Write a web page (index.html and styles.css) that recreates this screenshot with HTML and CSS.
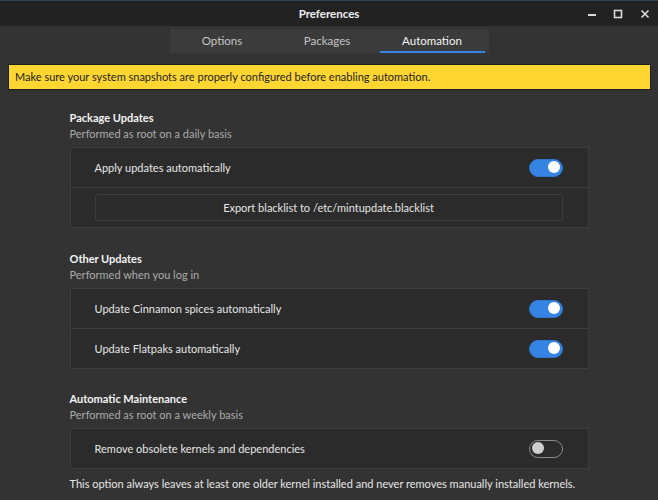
FILE: index.html
```html
<!DOCTYPE html>
<html lang="en">
<head>
    <meta charset="UTF-8">
    <meta name="viewport" content="width=device-width, initial-scale=1.0">
    <title>Preferences</title>
    <link rel="stylesheet" href="styles.css">
</head>
<body>

    <div class="titlebar">
        <span class="title">Preferences</span>
        <div class="controls">
            <svg width="10" height="10" viewBox="0 0 10 10"><rect x="1" y="5" width="8" height="2" fill="#ddd"/></svg>
            <svg class="max" width="10" height="10" viewBox="0 0 10 10"><rect x="1.5" y="1.5" width="7" height="7" fill="none" stroke="#ddd" stroke-width="1.6"/></svg>
            <svg class="close" width="10" height="10" viewBox="0 0 10 10"><path d="M1.5 1.5 L8.5 8.5 M8.5 1.5 L1.5 8.5" stroke="#ddd" stroke-width="1.6"/></svg>
        </div>
    </div>

    <div class="tabs">
        <div class="tab">Options</div>
        <div class="tab">Packages</div>
        <div class="tab active">Automation</div>
    </div>

    <div class="banner">Make sure your system snapshots are properly configured before enabling automation.</div>

    <div class="content">
        <div class="section">
            <h3>Package Updates</h3>
            <p class="sub">Performed as root on a daily basis</p>
            <div class="card">
                <div class="row">
                    <span>Apply updates automatically</span>
                    <div class="switch on"></div>
                </div>
                <div class="row">
                    <button class="export">Export blacklist to /etc/mintupdate.blacklist</button>
                </div>
            </div>
        </div>

        <div class="section">
            <h3>Other Updates</h3>
            <p class="sub">Performed when you log in</p>
            <div class="card">
                <div class="row">
                    <span>Update Cinnamon spices automatically</span>
                    <div class="switch on"></div>
                </div>
                <div class="row">
                    <span>Update Flatpaks automatically</span>
                    <div class="switch on"></div>
                </div>
            </div>
        </div>

        <div class="section">
            <h3>Automatic Maintenance</h3>
            <p class="sub">Performed as root on a weekly basis</p>
            <div class="card">
                <div class="row">
                    <span>Remove obsolete kernels and dependencies</span>
                    <div class="switch"></div>
                </div>
            </div>
            <p class="note">This option always leaves at least one older kernel installed and never removes manually installed kernels.</p>
        </div>
    </div>

</body>
</html>
```

FILE: styles.css
```css
body {
    font-family: Lato, sans-serif;
    font-size: 11px;
    background-color: #333333;
    color: #e6e6e6;
    margin: 0;
    overflow: hidden;
}

.titlebar {
    height: 26px;
    background-color: #222222;
    border-top: 1px solid #26465a;
    box-sizing: border-box;
    display: flex;
    align-items: center;
    justify-content: center;
    position: relative;
}

.title {
    font-weight: bold;
    font-size: 11.5px;
    color: #f0f0f0;
}

.controls {
    position: absolute;
    right: 8px;
    top: 8px;
    display: flex;
}

.controls .max {
    margin-left: 16px;
}

.controls .close {
    margin-left: 17px;
}

.tabs {
    width: 319px;
    height: 24px;
    margin: 3px auto 0;
    background-color: #3b3b3b;
    display: flex;
}

.tab {
    flex: 1;
    text-align: center;
    line-height: 24px;
    color: #c4c4c4;
    font-size: 11.5px;
    box-sizing: border-box;
}

.tab.active {
    color: #f4f4f4;
    border-bottom: 2px solid #3584e4;
    line-height: 23px;
    margin-right: 4px;
}

.banner {
    margin: 11px 7px 0 8px;
    height: 26px;
    box-sizing: border-box;
    background-color: #fed631;
    border: 1px solid #1e1e1e;
    color: #222222;
    line-height: 24px;
    padding-left: 6px;
}

.content {
    width: 519px;
    margin: 20px auto 0;
}

.section {
    margin-bottom: 23px;
}

.section + .section {
    margin-bottom: 22px;
}

h3 {
    margin: 0;
    font-size: 11px;
    font-weight: bold;
    color: #f4f4f4;
    line-height: 16px;
}

.sub {
    margin: 0 0 5px;
    line-height: 16px;
    color: #ababab;
}

.card {
    background-color: #2b2b2b;
    border: 1px solid #3d3d3d;
}

.row {
    height: 39px;
    display: flex;
    align-items: center;
    justify-content: space-between;
    padding: 0 25px 0 24px;
}

.row + .row {
    border-top: 1px solid #3d3d3d;
}

.switch {
    width: 34px;
    height: 18px;
    border-radius: 9px;
    box-sizing: border-box;
    border: 1.5px solid #8a8a8a;
    position: relative;
}

.switch::after {
    content: "";
    position: absolute;
    width: 12px;
    height: 12px;
    border-radius: 50%;
    background-color: #cfcfcf;
    top: 1.5px;
    left: 2px;
}

.switch.on {
    background-color: #3584e4;
    border-color: #2e76d0;
}

.switch.on::after {
    background-color: #ffffff;
    left: auto;
    right: 2px;
}

.export {
    width: 100%;
    height: 27px;
    background-color: #2b2b2b;
    border: 1px solid #3d3d3d;
    border-radius: 2px;
    color: #e6e6e6;
    font-family: inherit;
    font-size: 11px;
}

.note {
    margin: 8px 0 0;
    line-height: 14px;
    white-space: nowrap;
}
```
